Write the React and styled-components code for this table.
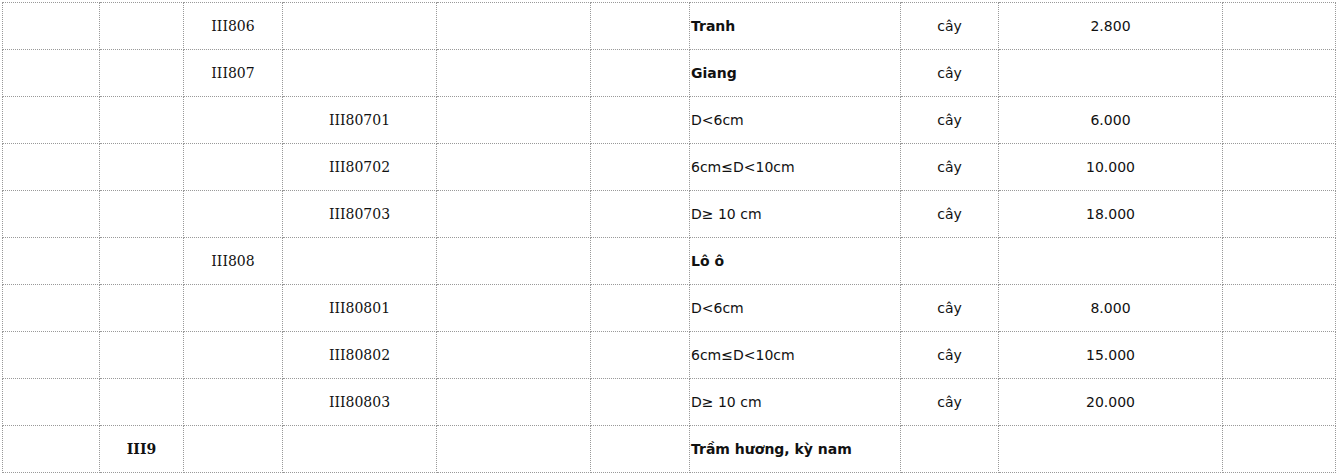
import React from "react";
import styled, { createGlobalStyle } from "styled-components";

const Global = createGlobalStyle`
  html, body { margin: 0; padding: 0; background: #fff; }
  body { font-family: "DejaVu Sans", Verdana, sans-serif; color: #111; }
`;

const Table = styled.table`
  border-collapse: collapse;
  table-layout: fixed;
  width: 1333px;
  margin: 2px 0 0 2px;
`;

const Cell = styled.td`
  border: 1px dotted #999;
  height: 46px;
  padding: 0 ${(p) => (p.$left ? "1px" : "0")};
  text-align: ${(p) => (p.$left ? "left" : "center")};
  vertical-align: middle;
  font-family: ${(p) =>
    p.$serif ? '"DejaVu Serif", Georgia, serif' : '"DejaVu Sans", Verdana, sans-serif'};
  font-size: 14px;
  font-weight: ${(p) => (p.$bold ? 700 : 400)};
  color: #111;
  white-space: nowrap;
  overflow: hidden;
`;

const widths = [97, 84, 99, 154, 154, 99, 211, 98, 224, 113];

const rows = [
  { level: 2, code: "III806", name: "Tranh", bold: true, unit: "cây", price: "2.800" },
  { level: 2, code: "III807", name: "Giang", bold: true, unit: "cây", price: "" },
  { level: 3, code: "III80701", name: "D<6cm", unit: "cây", price: "6.000" },
  { level: 3, code: "III80702", name: "6cm≤D<10cm", unit: "cây", price: "10.000" },
  { level: 3, code: "III80703", name: "D≥ 10 cm", unit: "cây", price: "18.000" },
  { level: 2, code: "III808", name: "Lô ô", bold: true, unit: "", price: "" },
  { level: 3, code: "III80801", name: "D<6cm", unit: "cây", price: "8.000" },
  { level: 3, code: "III80802", name: "6cm≤D<10cm", unit: "cây", price: "15.000" },
  { level: 3, code: "III80803", name: "D≥ 10 cm", unit: "cây", price: "20.000" },
  { level: 1, code: "III9", codeBold: true, name: "Trầm hương, kỳ nam", bold: true, unit: "", price: "" },
];

export default function App() {
  return (
    <>
      <Global />
      <Table>
        <colgroup>
          {widths.map((w, i) => (
            <col key={i} style={{ width: w }} />
          ))}
        </colgroup>
        <tbody>
          {rows.map((r, i) => (
            <tr key={i}>
              <Cell />
              {[1, 2, 3, 4].map((lv) => (
                <Cell key={lv} $serif $bold={r.codeBold && lv === r.level}>
                  {lv === r.level ? r.code : ""}
                </Cell>
              ))}
              <Cell />
              <Cell $left $bold={r.bold}>{r.name}</Cell>
              <Cell>{r.unit}</Cell>
              <Cell>{r.price}</Cell>
              <Cell />
            </tr>
          ))}
        </tbody>
      </Table>
    </>
  );
}
